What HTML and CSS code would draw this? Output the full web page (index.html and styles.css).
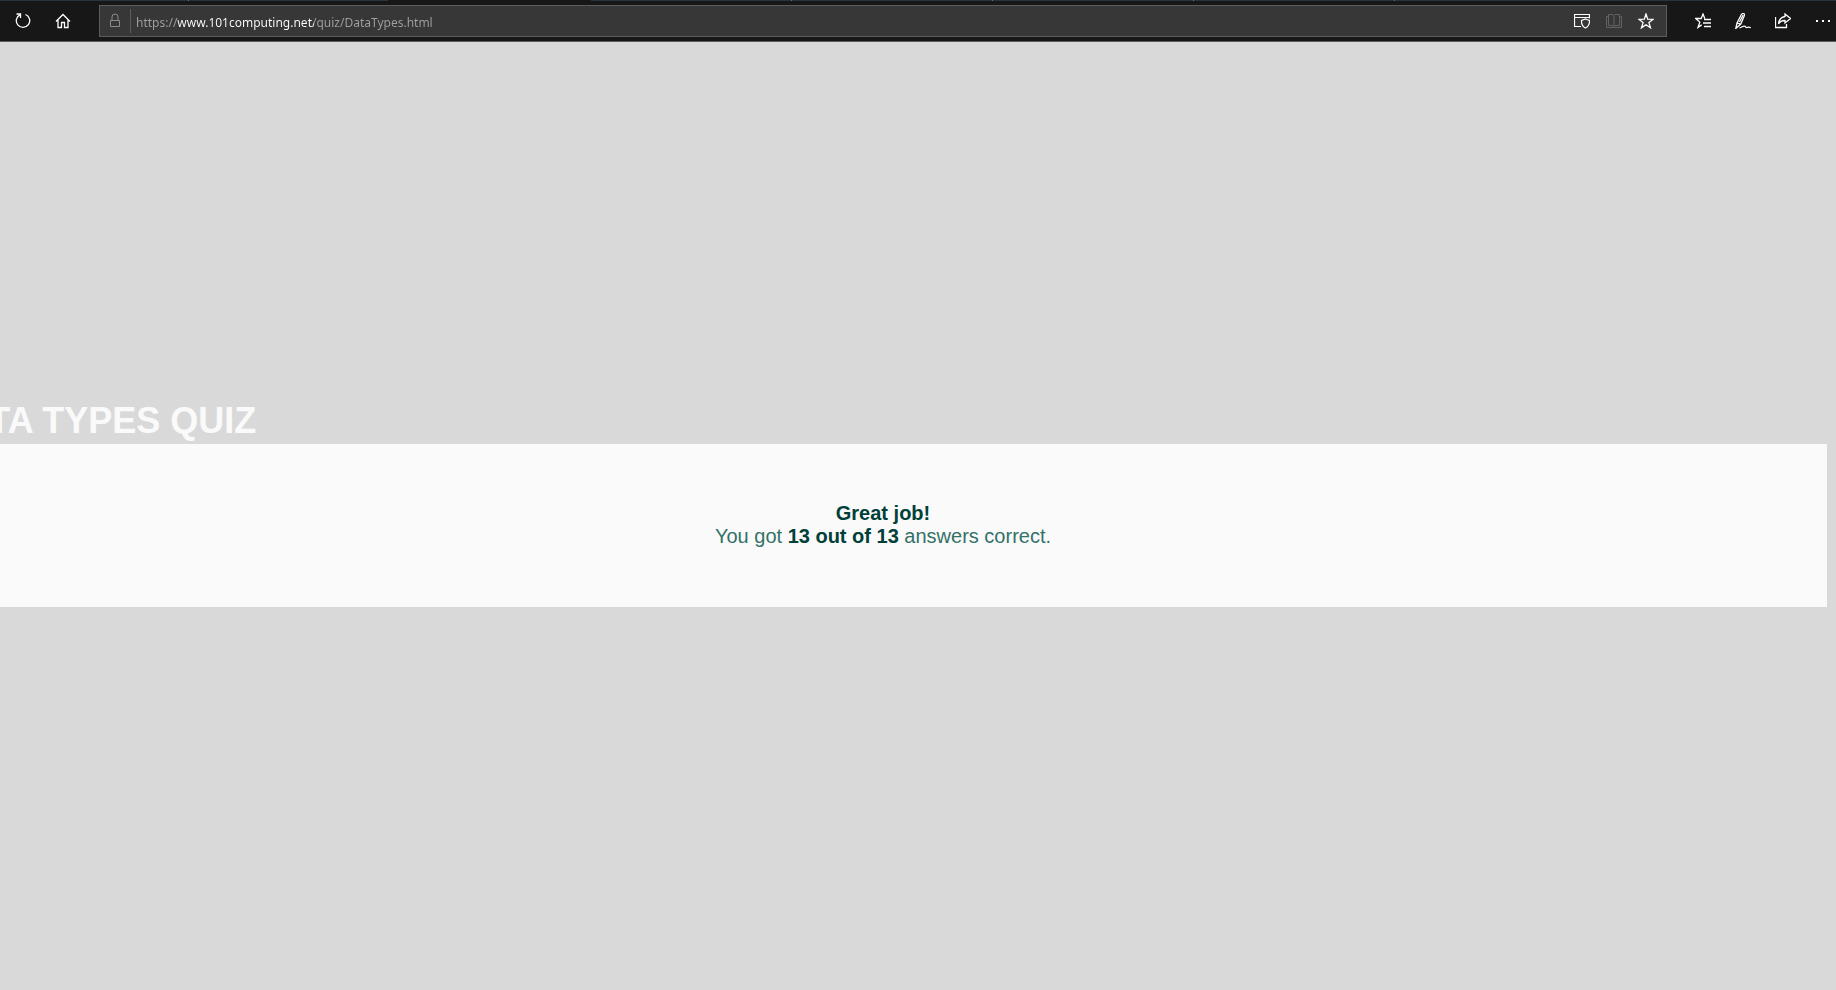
FILE: index.html
```html
<!DOCTYPE html>
<html lang="en">
<head>
<meta charset="utf-8">
<title>Data Types Quiz</title>
<link rel="stylesheet" href="styles.css">
</head>
<body>
<header class="browser">
  <div class="tab-strip"><i class="tab tab-first"></i><i class="tab tab-plain"></i><i class="tab tab-active"></i><i class="tab"></i><i class="tab"></i><i class="tab"></i><i class="tab"></i><i class="tab-rest"></i></div>
  <nav class="toolbar" aria-label="Browser">
    <button class="tool" aria-label="Refresh"><svg viewBox="0 0 16 16"><path d="M10.500 1.500A6.700 6.700 0 1 1 5.300 1.600M1.500 1H5.500V5" stroke-width="1.300"/></svg></button>
    <button class="tool" aria-label="Home"><svg viewBox="0 0 16 16"><path d="M1 8.500 8 1.500l7 7M3 7v7.500h3.500V9.500h3v5H13V7" stroke-width="1.300"/></svg></button>
    <div class="address">
      <svg class="lock" viewBox="0 0 16 16"><path d="M3.500 7.500h9v6h-9zM5 7.500V4a3 3 0 0 1 6 0v3.500"/></svg>
      <input class="url" type="text" aria-label="Address" value="https://www.101computing.net/quiz/DataTypes.html">
      <button class="inner-tool" aria-label="Site protection"><svg viewBox="0 0 16 16"><path d="M7 13.500H.5v-12h15v4M.5 4.500h15M11.500 6l4 1.500c.2 3.500-1 6-4 7.500-3-1.500-4.200-4-4-7.500z" stroke-width="1.200"/></svg></button>
      <button class="inner-tool dim" aria-label="Reading view"><svg viewBox="0 0 16 16"><path d="M3 3.500H.5v11h15v-11H13M2.500 1.500H7L8 2.500l1-1h4.500v11H9l-1 1-1-1H2.500zM8 2.500v11"/></svg></button>
      <button class="inner-tool" aria-label="Add to favorites"><svg viewBox="0 0 16 16"><path d="m8 1 1.700 5.200 5.600.1-4.400 3.300 1.600 5.200L8 11.700l-4.500 3.100 1.600-5.200L.7 6.300l5.600-.1z" stroke-width="1.300"/></svg></button>
    </div>
    <button class="tool" aria-label="Favorites"><svg viewBox="0 0 16 16"><path d="M9.800 5.500 8 1 6.200 5.500H.8l4 3.600L3 14.400l3.700-2.500M9 6.500h7M8 10h8M9 13.500h7" stroke-width="1.300"/></svg></button>
    <button class="tool" aria-label="Notes"><svg viewBox="0 0 16 16"><path d="M.8 15.500 2 10 6 2.200Q7.500-.2 9 .7q.8.700.1 2.600L5.800 11zM2 10l3.600 1.200M4.500 9 8 2.200M4.500 14.800c2.500 0 3.500-2.500 5.500-1.500 1 .6.800 1.700 2 1.200s1.600-.8 2.300-.1l1.500.2" stroke-width="1.300"/></svg></button>
    <button class="tool" aria-label="Share"><svg viewBox="0 0 16 16"><path d="M.5 4v10.500h11V11M10 1l5.500 4.500L10 10V7.500C7 7.300 5 8.500 3.500 11 4 6.500 6 4 10 3.500z" stroke-width="1.300"/></svg></button>
    <button class="tool tool-last" aria-label="More"><svg viewBox="0 0 16 16"><path class="dots" d="M1 7h2v2H1zM7 7h2v2H7zM13 7h2v2h-2z"/></svg></button>
  </nav>
</header>
<main class="page">
  <h1 class="title">DATA TYPES QUIZ</h1>
  <section class="result">
    <p><b>Great job!</b></p>
    <p>You got <b>13 out of 13</b> answers correct.</p>
  </section>
</main>
</body>
</html>
```
FILE: styles.css
```css
* { box-sizing: border-box; }
body {
  margin: 0;
  min-height: 100vh;
  background: #d9d9d9;
  font-family: "Liberation Sans", Arial, sans-serif;
  overflow-x: hidden;
}
.browser { background: #171717; border-bottom: 1px solid #5c5c5c; }
.tab-strip { display: flex; height: 1px; background: #243440; }
.tab { width: 201px; border-right: 1px solid #65717a; }
.tab-first { width: 189px; }
.tab-plain { width: 199px; border: 0; }
.tab-active { width: 203px; background: #171717; border: 0; }
.tab-rest { flex: 1; }
.toolbar { display: flex; align-items: center; height: 40px; padding-left: 3px; }
button { padding: 0; border: 0; background: none; color: #fff; }
svg { display: block; width: 16px; height: 16px; fill: none; stroke: currentColor; }
.dots { fill: currentColor; stroke: none; }
.tool { display: grid; place-items: center; flex: none; width: 40px; height: 32px; }
.tool-last { width: 33px; padding-left: 7px; }
.address {
  flex: 1;
  display: flex;
  align-items: center;
  height: 32px;
  margin: 0 16px;
  padding-right: 4px;
  background: #373737;
  border: 1px solid #5c5c5c;
}
.lock { flex: none; margin: 0 7px; color: #8c8c8c; }
/* The host part of the URL is drawn brighter than the rest. */
.url {
  flex: 1;
  min-width: 0;
  height: 24px;
  padding: 2px 0 0 5px;
  border: 0;
  border-left: 1px solid #5c5c5c;
  outline: 0;
  font: 12px/22px "Noto Sans", "Segoe UI", sans-serif;
  color: transparent;
  background: linear-gradient(90deg, #a0a0a0 46px, #fff 46px, #fff 183px, #a0a0a0 183px);
  -webkit-background-clip: text;
  background-clip: text;
}
.inner-tool { display: grid; place-items: center; flex: none; width: 32px; height: 30px; }
.dim { color: #626262; }
.page { margin: 0 9px 0 -61px; padding-top: 359px; }
.title { margin: 0 0 3px; font-size: 36px; line-height: 40px; color: #fafafa; white-space: nowrap; }
.result {
  padding: 58px 0 59px;
  background: #fafafa;
  color: #337169;
  font-size: 20px;
  line-height: 23px;
  text-align: center;
}
.result p { margin: 0; }
.result b { color: #004039; }
```
